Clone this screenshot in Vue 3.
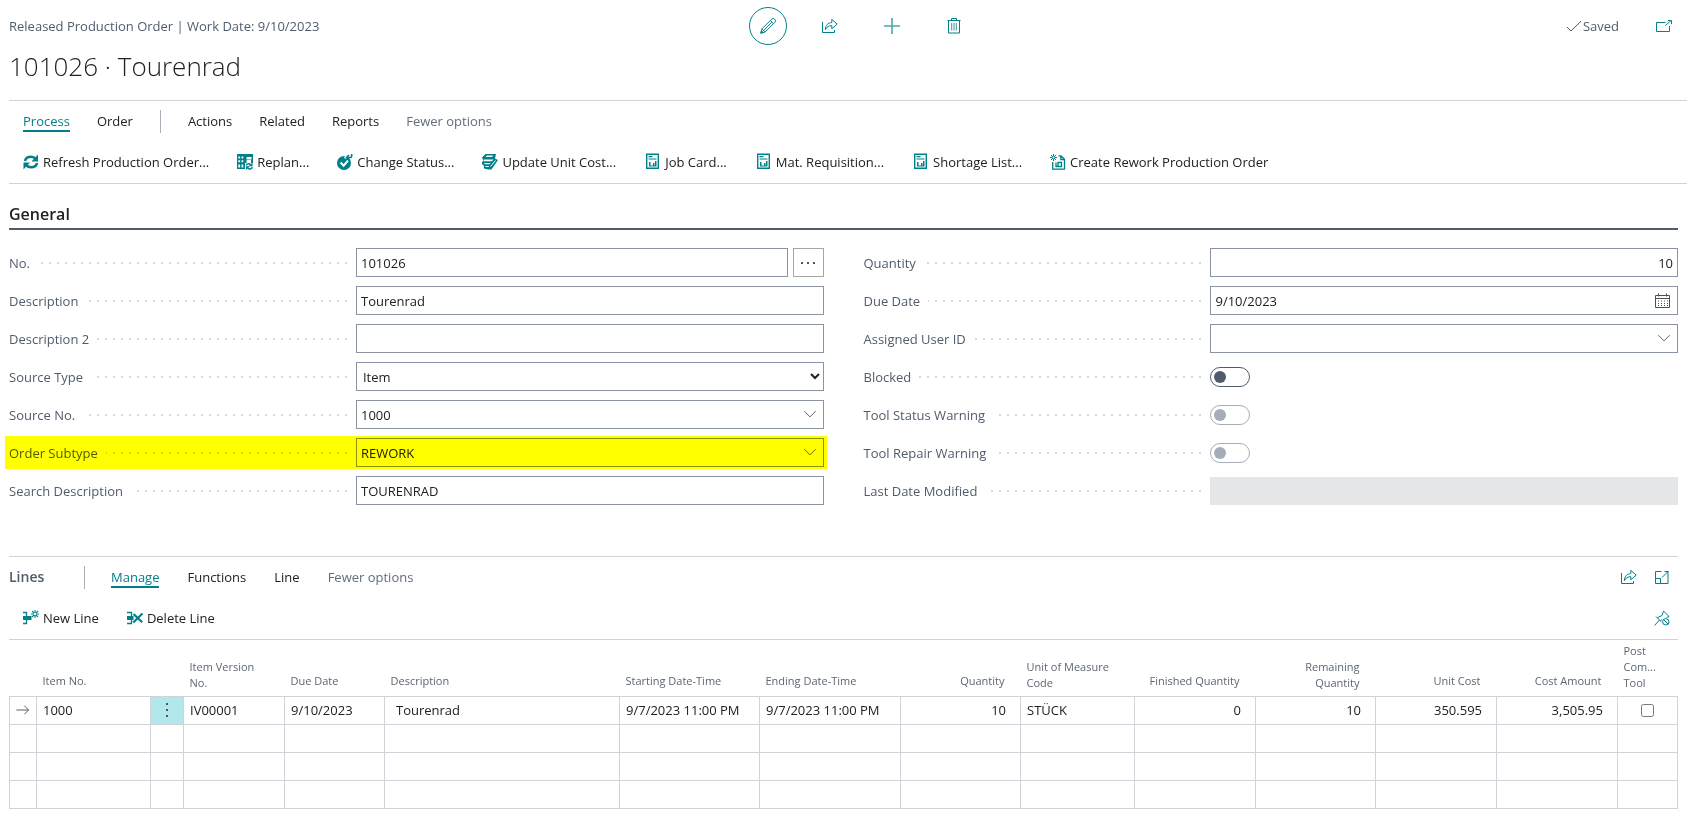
<script setup>
import { ref } from 'vue'

const icons = {
  edit: '<path d="M.8 15.2l1.2-4.4L11.7 1.1a2 2 0 0 1 2.9 0l.3.3a2 2 0 0 1 0 2.9L5.2 14z M2 10.8L5.2 14 M10.3 2.5l3.2 3.2 M3.7 12.4l8.1-8.1 M.8 15.2l2.4-.7-1.7-1.7z"/>',
  share: '<path d="M.5 4v10.500h12V12 M3.400 11.600C3.600 7 6 4.800 9.800 4.600V1.400l5.400 4.700-5.400 4.700V7.700C6.800 7.600 5 8.800 3.400 11.600z"/>',
  plus: '<path d="M8 0v16M0 8h16" stroke-width="1.600" opacity=".7"/>',
  trash: '<path d="M1.500 2.500h13M5.500 2.500V.5h5v2M2.500 2.500v12.500h11V2.500"/><path d="M5.700 5v7.500M8 5v7.500M10.300 5v7.500" stroke-width=".8"/>',
  check: '<path d="M1 9l4 4L15 3.200"/>',
  popout: '<path d="M9.500 4.500H.5v9h13V8M9.400 7.600L15 2.500M12 2.500h3.500V6"/>',
  refresh: '<g stroke-width="2.600"><path d="M2 7C2.600 4.200 5 2.700 8 2.700c2 0 3.600.8 4.700 2.200M14 9c-.6 2.800-3 4.300-6 4.300-2 0-3.600-.8-4.700-2.200"/></g><path class="f" d="M15 .5v7H8.500zM.5 15.500v-7H7z"/>',
  replan: '<path class="f" fill-rule="evenodd" d="M0 0h16v9h-2V6H9.500v3H8v6H0zM1.300 2.500v2h1.800v-2zM4.500 2.500v2h1.800v-2zM9.500 3v2.500H14.500V3zM1.300 6.300v2h1.800v-2zM4.500 6.300v2h1.800v-2zM1.300 10.500v3h1.800v-3zM4.500 10.500v3h1.800v-3z"/><path stroke-width="1.500" d="M9.300 11.500c.6-2 3.200-2.200 4.300-.8M15.300 13c-.6 2.200-3.200 2.600-4.500 1"/><path class="f" d="M15.500 8.500v3.800h-3.800zM9 16v-3.800h3.800z"/>',
  status: '<circle class="f" cx="7" cy="9" r="7"/><path d="M3.600 8.500l3 3.200L11 6.500" stroke="#fff" stroke-width="2"/><path d="M9 4.500C9.500 1.500 12 .8 14 2.500" stroke="#fff" stroke-width="4"/><path d="M9.700 3.500h3.500c1 0 1.500-.6 1.500-1.500V0M12 1L9.500 3.500 12 6" stroke-width="1.600"/>',
  cost: '<path class="f" fill-rule="evenodd" d="M0 3.500L3.500 0H14l-1 4.500L16 6l-6.500 9.500H6L2 14.500v-2.500L0 10V8l1.500-1zM1.800 5.500v1.800h8L11.500 5.500zM2.500 9v1.200h5L8.500 9zM3.500 12v1h2.800l.8-1zM5 1.500L3.500 3h6.300L11.500 1.500z"/><path d="M8.500 12.500l5-6" stroke="#fff"/>',
  report: '<path d="M2.700.2h11.600v14.100H2.700z" stroke-width="1.400"/><path d="M4.500 2.700h4M4.500 5h8" stroke-width="1.200"/><path class="f" d="M5 8h1.500v3.500H9V9h1.500v2.500h.5V7h1.500v5.500H5z"/>',
  rework: '<path d="M8.500 1.800H11l3.500 3.500v9.900H2.700V8M10.800 2v3.500h3.700M6 8.500v4h2M8 8.500h3.500v4H8z" stroke-width="1.300"/><path d="M3.500 0v7M0 3.500h7M1 1l5 5M6 1L1 6" stroke-width="1"/><circle cx="3.500" cy="3.500" r="1" class="w"/>',
  newLine: '<path class="f" d="M0 6h8.500v4H0z"/><path d="M0 2.500h3.500V6M0 13.500h3.500V10" stroke-width="1.300"/><path d="M12 0v8M8 4h8M9 1l6 6M15 1L9 7" stroke-width="1.100"/><circle cx="12" cy="4" r="1.300" class="w"/>',
  deleteLine: '<path class="f" d="M0 6h6.500v4H0z"/><path d="M0 2.500h4.500V6M0 13.500h4.500V10" stroke-width="1.300"/><path d="M6.500 4l8.700 8.300M15.500 3.500L6.200 12.500" stroke-width="2.200"/>',
  expand: '<path d="M7.500 2.500H1.500v12h12.500V2M1.500 9.500h5v5M8 8.500l5.500-5.500M10.500 2.500h4"/>',
  unpin: '<path d="M.6 15.400l4.800-5.200M2 6.500l5.200 5.200M3.600 7.600L8 5.500 9.500 1l5.500 5.500-2.500 1M6.500 11l1.200-1.500"/><circle cx="11.800" cy="11.800" r="3.200"/><path d="M9.500 9.500l4.600 4.600"/>',
  arrow: '<path d="M1.500 8h13M10 3.500L14.500 8 10 12.500"/>',
  chevron: '<path d="M1.500 4.800L8 11.300l6.500-6.500"/>',
  calendar: '<path d="M.5 2.500h14v12H.5zM.5 5.500h14M3.500.5v3M11.500.5v3"/><path d="M3 8h10M3 10.500h10M3 12.500h10" stroke-dasharray="1 2"/>'
}

const topActions = [
  { icon: 'edit', label: 'Edit', round: true },
  { icon: 'share', label: 'Share' },
  { icon: 'plus', label: 'New' },
  { icon: 'trash', label: 'Delete' }
]

const actions = [
  { icon: 'refresh', text: 'Refresh Production Order...' },
  { icon: 'replan', text: 'Replan...' },
  { icon: 'status', text: 'Change Status...' },
  { icon: 'cost', text: 'Update Unit Cost...' },
  { icon: 'report', text: 'Job Card...', document: true },
  { icon: 'report', text: 'Mat. Requisition...', document: true },
  { icon: 'report', text: 'Shortage List...', document: true },
  { icon: 'rework', text: 'Create Rework Production Order' }
]

const fieldColumns = ref([
  [
    { id: 'no', label: 'No.', type: 'text', value: '101026', assist: true },
    { id: 'description', label: 'Description', type: 'text', value: 'Tourenrad' },
    { id: 'description2', label: 'Description 2', type: 'text', value: '' },
    { id: 'source-type', label: 'Source Type', type: 'select', value: 'Item', options: ['Item', 'Family', 'Sales Header'] },
    { id: 'source-no', label: 'Source No.', type: 'text', value: '1000', icon: 'chevron' },
    { id: 'order-subtype', label: 'Order Subtype', type: 'text', value: 'REWORK', icon: 'chevron', marked: true },
    { id: 'search-description', label: 'Search Description', type: 'text', value: 'TOURENRAD' }
  ],
  [
    { id: 'quantity', label: 'Quantity', type: 'text', value: '10', right: true },
    { id: 'due-date', label: 'Due Date', type: 'text', value: '9/10/2023', icon: 'calendar' },
    { id: 'assigned-user', label: 'Assigned User ID', type: 'text', value: '', icon: 'chevron' },
    { id: 'blocked', label: 'Blocked', type: 'toggle', value: false },
    { id: 'tool-status', label: 'Tool Status Warning', type: 'toggle', value: false, disabled: true },
    { id: 'tool-repair', label: 'Tool Repair Warning', type: 'toggle', value: false, disabled: true },
    { id: 'last-modified', label: 'Last Date Modified', type: 'text', value: '', disabled: true }
  ]
])

const columns = [
  { key: 'mark', width: 27, head: [] },
  { key: 'item', width: 114, head: ['Item No.'] },
  { key: 'menu', width: 33, head: [] },
  { key: 'version', width: 101, head: ['Item Version', 'No.'] },
  { key: 'due', width: 100, head: ['Due Date'] },
  { key: 'description', width: 235, head: ['Description'] },
  { key: 'start', width: 140, head: ['Starting Date-Time'] },
  { key: 'end', width: 141, head: ['Ending Date-Time'] },
  { key: 'quantity', width: 120, head: ['Quantity'], right: true },
  { key: 'unit', width: 114, head: ['Unit of Measure', 'Code'] },
  { key: 'finished', width: 121, head: ['Finished Quantity'], right: true },
  { key: 'remaining', width: 120, head: ['Remaining', 'Quantity'], right: true },
  { key: 'unitCost', width: 121, head: ['Unit Cost'], right: true },
  { key: 'amount', width: 121, head: ['Cost Amount'], right: true },
  { key: 'post', width: 60, head: ['Post', 'Com...', 'Tool'] }
]

const rows = [
  {
    item: '1000', version: 'IV00001', due: '9/10/2023', description: 'Tourenrad',
    start: '9/7/2023 11:00 PM', end: '9/7/2023 11:00 PM', quantity: '10', unit: 'STÜCK',
    finished: '0', remaining: '10', unitCost: '350.595', amount: '3,505.95'
  },
  null, null, null
]
const postTool = ref(false)
</script>

<template>
  <main class="page">
    <header class="top">
      <p class="caption">Released Production Order | Work Date: 9/10/2023</p>
      <div class="top-actions">
        <button v-for="a in topActions" :key="a.icon" type="button" :class="['icon-button', { round: a.round }]" :aria-label="a.label">
          <svg class="icon" viewBox="0 0 16 16" v-html="icons[a.icon]" />
        </button>
      </div>
      <div class="top-status">
        <span class="saved"><svg class="icon" viewBox="0 0 16 16" v-html="icons.check" />Saved</span>
        <button type="button" class="bare" aria-label="Open in new window">
          <svg class="icon" viewBox="0 0 16 16" v-html="icons.popout" />
        </button>
      </div>
    </header>
    <h1>101026 · Tourenrad</h1>

    <nav class="ribbon" aria-label="Order actions">
      <div class="tabs">
        <a href="#" class="active">Process</a>
        <a href="#">Order</a>
        <span class="divider"></span>
        <a href="#">Actions</a>
        <a href="#">Related</a>
        <a href="#">Reports</a>
        <a href="#" class="muted">Fewer options</a>
      </div>
      <div class="actions">
        <button v-for="a in actions" :key="a.text" type="button" :class="['action', { document: a.document }]">
          <svg class="icon" viewBox="0 0 16 16" v-html="icons[a.icon]" />{{ a.text }}
        </button>
      </div>
    </nav>

    <section class="general">
      <h2>General</h2>
      <div class="columns">
        <div v-for="(column, i) in fieldColumns" :key="i" class="column">
          <div v-for="f in column" :key="f.id" :class="['field', { marked: f.marked }]">
            <div class="label-cell">
              <label :for="f.id">{{ f.label }}</label>
              <span class="leader"></span>
            </div>
            <div class="control">
              <input v-if="f.type === 'toggle'" :id="f.id" v-model="f.value" type="checkbox" role="switch" class="toggle" :disabled="f.disabled">
              <select v-else-if="f.type === 'select'" :id="f.id" v-model="f.value" class="box">
                <option v-for="o in f.options" :key="o">{{ o }}</option>
              </select>
              <div v-else class="box-wrap">
                <input :id="f.id" v-model="f.value" type="text" :class="['box', { right: f.right }]" :disabled="f.disabled">
                <button v-if="f.icon" type="button" :class="['bare', 'inner', f.icon]" :aria-label="'Choose ' + f.label">
                  <svg class="icon" viewBox="0 0 16 16" v-html="icons[f.icon]" />
                </button>
              </div>
              <button v-if="f.assist" type="button" class="assist" aria-label="Assist edit"><i></i><i></i><i></i></button>
            </div>
          </div>
        </div>
      </div>
    </section>

    <section class="lines">
      <div class="lines-head">
        <h3>Lines</h3>
        <span class="divider"></span>
        <nav class="line-tabs" aria-label="Line actions">
          <a href="#" class="active">Manage</a>
          <a href="#">Functions</a>
          <a href="#">Line</a>
          <a href="#" class="muted">Fewer options</a>
        </nav>
        <div class="lines-tools">
          <button type="button" class="bare" aria-label="Share lines"><svg class="icon" viewBox="0 0 16 16" v-html="icons.share" /></button>
          <button type="button" class="bare" aria-label="Expand lines"><svg class="icon" viewBox="0 0 16 16" v-html="icons.expand" /></button>
        </div>
      </div>
      <div class="actions lines-actions">
        <button type="button" class="action"><svg class="icon" viewBox="0 0 16 16" v-html="icons.newLine" />New Line</button>
        <button type="button" class="action"><svg class="icon" viewBox="0 0 16 16" v-html="icons.deleteLine" />Delete Line</button>
        <button type="button" class="bare pin" aria-label="Unpin"><svg class="icon" viewBox="0 0 16 16" v-html="icons.unpin" /></button>
      </div>
      <table>
        <colgroup>
          <col v-for="c in columns" :key="c.key" :style="{ width: c.width + 'px' }">
        </colgroup>
        <thead>
          <tr>
            <th v-for="c in columns" :key="c.key" scope="col" :class="{ right: c.right, single: c.head.length === 1 }">
              <span v-for="line in c.head" :key="line">{{ line }}</span>
            </th>
          </tr>
        </thead>
        <tbody>
          <tr v-for="(row, r) in rows" :key="r">
            <td v-for="c in columns" :key="c.key" :class="[c.key, { right: c.right, filled: row }]">
              <template v-if="row">
                <svg v-if="c.key === 'mark'" class="icon" viewBox="0 0 16 16" v-html="icons.arrow" />
                <button v-else-if="c.key === 'menu'" type="button" class="row-menu" aria-label="Row options"><i></i><i></i><i></i></button>
                <input v-else-if="c.key === 'post'" v-model="postTool" type="checkbox" aria-label="Post Com... Tool">
                <template v-else>{{ row[c.key] }}</template>
              </template>
            </td>
          </tr>
        </tbody>
      </table>
    </section>
  </main>
</template>

<style>
body {
  margin: 0;
  background: #fff;
}
</style>

<style scoped>
.page {
  --teal: #008089;
  --slate: #505c6d;
  --rule: #d0d4d9;
  box-sizing: border-box;
  padding-left: 9px;
  font: 13px/18px "Open Sans", "Noto Sans", sans-serif;
  color: #212121;
}
.page *,
.page *::before,
.page *::after {
  box-sizing: border-box;
}
button,
input,
select {
  font: inherit;
  color: inherit;
  margin: 0;
}
button {
  padding: 0;
  border: 0;
  background: none;
}
.icon {
  display: block;
  flex: none;
  width: 16px;
  height: 16px;
  fill: none;
  stroke: currentColor;
  stroke-width: 1;
  overflow: visible;
}
.icon :deep(.f) {
  fill: currentColor;
  stroke: none;
}
.icon :deep(.w) {
  fill: #fff;
  stroke: none;
}
.bare {
  color: var(--teal);
}

.top {
  display: grid;
  grid-template-columns: 740fr auto 714fr;
  align-items: center;
  height: 45px;
  padding-top: 7px;
}
.caption {
  margin: 0;
  color: var(--slate);
}
.top-actions {
  display: flex;
  gap: 24px;
}
.icon-button {
  display: grid;
  place-items: center;
  width: 38px;
  height: 38px;
  color: var(--teal);
}
.round {
  border: 1px solid var(--teal);
  border-radius: 50%;
}
.top-status {
  display: flex;
  justify-content: flex-end;
  align-items: center;
  gap: 37px;
  padding-right: 15px;
}
.saved {
  display: flex;
  align-items: center;
  gap: 1px;
  color: var(--slate);
}
h1 {
  margin: 0;
  padding-top: 1px;
  height: 55px;
  font-size: 26px;
  line-height: 40px;
  font-weight: 300;
}

.ribbon {
  border-top: 1px solid var(--rule);
  border-bottom: 1px solid var(--rule);
}
.tabs,
.line-tabs {
  display: flex;
  align-items: center;
  gap: 27px;
}
.tabs {
  height: 41px;
  padding-left: 14px;
}
.tabs a,
.line-tabs a {
  color: inherit;
  text-decoration: none;
  border-bottom: 2px solid transparent;
}
.tabs .active,
.line-tabs .active {
  color: var(--teal);
  border-color: var(--teal);
}
.tabs .muted,
.line-tabs .muted {
  color: #626d7c;
}
.divider {
  width: 1px;
  height: 23px;
  background: #a9b0ba;
}
.actions {
  display: flex;
  align-items: center;
  gap: 28px;
  height: 41px;
  padding: 0 0 2px 14px;
}
.action {
  display: flex;
  align-items: center;
  gap: 4px;
  white-space: nowrap;
}
.action .icon {
  color: var(--teal);
}
.document {
  gap: 5px;
}

.general {
  padding: 16px 9px 0 0;
}
h2 {
  margin: 0;
  height: 30px;
  font-size: 16px;
  line-height: 28px;
  font-weight: 600;
  border-bottom: 2px solid var(--slate);
}
.columns {
  display: grid;
  grid-template-columns: 1fr 1fr;
  gap: 40px;
  padding-top: 18px;
}
.column {
  display: flex;
  flex-direction: column;
  gap: 9px;
}
.field {
  position: relative;
  display: flex;
  height: 29px;
}
.marked::after {
  content: "";
  position: absolute;
  inset: -2px -3px -2px -4px;
  background: #ff0;
  mix-blend-mode: multiply;
  pointer-events: none;
}
.label-cell {
  display: flex;
  align-items: center;
  gap: 8px;
  width: 42.6%;
  padding-right: 9px;
  color: var(--slate);
}
.leader {
  flex: 1;
  height: 2px;
  background: repeating-linear-gradient(to left, #d6d9dd 0 2px, transparent 2px 8px);
}
.control {
  flex: 1;
  display: flex;
  align-items: center;
  gap: 5px;
}
.box-wrap {
  position: relative;
  flex: 1;
}
.box {
  display: block;
  width: 100%;
  height: 29px;
  padding: 0 4px;
  border: 1px solid #8a94a3;
  border-radius: 0;
  background: #fff;
  outline: 0;
}
select.box {
  padding: 0 2px;
}
.box:disabled {
  height: 28px;
  border: 0;
  background: #e5e6e8;
}
.right {
  text-align: right;
}
.inner {
  position: absolute;
  top: 7px;
  right: 7px;
  color: #505050;
}
.inner.chevron .icon {
  width: 14px;
  height: 14px;
}
.assist {
  display: flex;
  justify-content: center;
  align-items: center;
  gap: 4px;
  width: 31px;
  height: 29px;
  border: 1px solid #a6a6a6;
}
.assist i,
.row-menu i {
  width: 2px;
  height: 2px;
  background: #555;
}
.toggle {
  appearance: none;
  width: 40px;
  height: 20px;
  padding: 3px;
  border: 1px solid var(--slate);
  border-radius: 10px;
}
.toggle::before {
  content: "";
  display: block;
  width: 12px;
  height: 12px;
  border-radius: 50%;
  background: var(--slate);
}
.toggle:checked::before {
  margin-left: auto;
}
.toggle:disabled {
  border-color: #a6adb8;
}
.toggle:disabled::before {
  background: #a6adb8;
}

.lines {
  margin: 51px 9px 0 0;
  border-top: 1px solid var(--rule);
}
.lines-head {
  display: flex;
  align-items: center;
  height: 40px;
}
h3 {
  margin: 0;
  width: 75px;
  font-size: 14px;
  font-weight: 600;
  color: var(--slate);
}
.line-tabs {
  margin-left: 26px;
  padding-top: 2px;
  gap: 28px;
}
.lines-tools {
  display: flex;
  gap: 17px;
  margin-left: auto;
  padding-right: 8px;
}
.lines-actions {
  height: 43px;
  padding-bottom: 0;
  border-bottom: 1px solid var(--rule);
}
.pin {
  margin-left: auto;
  padding-right: 8px;
}
table {
  width: 100%;
  table-layout: fixed;
  border-collapse: collapse;
}
th {
  height: 56px;
  padding: 0 6px 5px;
  font-size: 11px;
  line-height: 16px;
  font-weight: 400;
  text-align: left;
  vertical-align: bottom;
  white-space: nowrap;
  color: #5d6673;
}
th.single {
  line-height: 20px;
}
th span {
  display: block;
}
th.right {
  padding-right: 16px;
  text-align: right;
}
td {
  height: 28px;
  padding: 0 6px;
  border: 1px solid var(--rule);
  white-space: nowrap;
}
td.right {
  padding-right: 14px;
}
td.description {
  padding-left: 11px;
}
td.mark {
  padding: 0 5px;
  color: #555;
}
td.mark .icon {
  width: 15px;
}
td.menu {
  padding: 0;
}
td.menu.filled {
  background: #b2e8eb;
}
.row-menu {
  display: flex;
  flex-direction: column;
  justify-content: center;
  align-items: center;
  gap: 4px;
  width: 100%;
  height: 27px;
}
td.post {
  padding: 0;
  text-align: center;
}
td.post input {
  display: block;
  margin: 0 auto;
}
</style>
